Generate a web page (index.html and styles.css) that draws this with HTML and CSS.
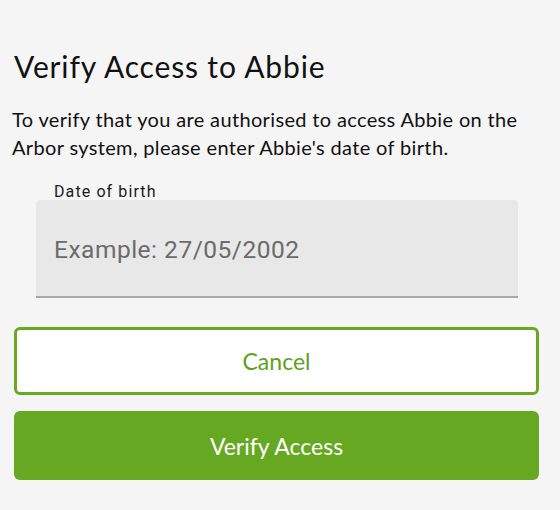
FILE: index.html
```html
<!DOCTYPE html>
<html lang="en">
<head>
<meta charset="utf-8">
<link rel="stylesheet" href="styles.css">
</head>
<body>
<main class="dialog">
  <h1 class="title">Verify Access to Abbie</h1>
  <p class="intro">To verify that you are authorised to access Abbie on the Arbor system, please enter Abbie's date of birth.</p>
  <div class="field">
    <label class="field-label" for="dob">Date of birth</label>
    <div class="field-box">
      <input id="dob" class="field-input" type="text" placeholder="Example: 27/05/2002">
    </div>
  </div>
  <div class="actions">
    <button class="btn btn-outline" type="button">Cancel</button>
    <button class="btn btn-solid" type="button">Verify Access</button>
  </div>
</main>
</body>
</html>
```
FILE: styles.css
```css
html, body {
  margin: 0;
  padding: 0;
  background: #f5f5f5;
}
body {
  font-family: "Lato", "Liberation Sans", sans-serif;
  color: #111;
}
.dialog {
  width: 525px;
  padding: 48px 0 0 14px;
}
.title {
  margin: 0 0 0 0;
  font-size: 30px;
  font-weight: 400;
  line-height: 36px;
  letter-spacing: 0.85px;
  color: #111;
}
.intro {
  margin: 21px 0 0 -2px;
  font-size: 20px;
  line-height: 28px;
  letter-spacing: 0.35px;
  color: #111;
}
.field {
  margin: 22px 21px 0 22px;
}
.field-label {
  display: block;
  padding-left: 18px;
  font-family: "Roboto", "Liberation Sans", sans-serif;
  font-size: 16px;
  line-height: 17px;
  letter-spacing: 1.1px;
  color: #1a1a1a;
}
.field-box {
  height: 96px;
  background: #e8e8e8;
  border-radius: 4px 4px 0 0;
  border-bottom: 2px solid #a8a8a8;
  display: flex;
  align-items: center;
}
.field-input {
  width: 100%;
  border: 0;
  background: transparent;
  padding: 3px 18px 0;
  font-family: "Roboto", "Liberation Sans", sans-serif;
  font-size: 24.5px;
  letter-spacing: 0.5px;
  color: #333;
  outline: none;
}
.field-input::placeholder {
  color: #6b6b6b;
  opacity: 1;
}
.actions {
  margin-top: 29px;
  display: flex;
  flex-direction: column;
  gap: 16px;
}
.btn {
  border-radius: 6px;
  font-family: "Lato", "Liberation Sans", sans-serif;
  font-size: 23px;
  cursor: pointer;
}
.btn-outline {
  height: 68px;
  background: #fff;
  border: 3px solid #6aa822;
  color: #60a020;
}
.btn-solid {
  height: 69px;
  background: #67a822;
  border: 0;
  color: #fff;
}
```
